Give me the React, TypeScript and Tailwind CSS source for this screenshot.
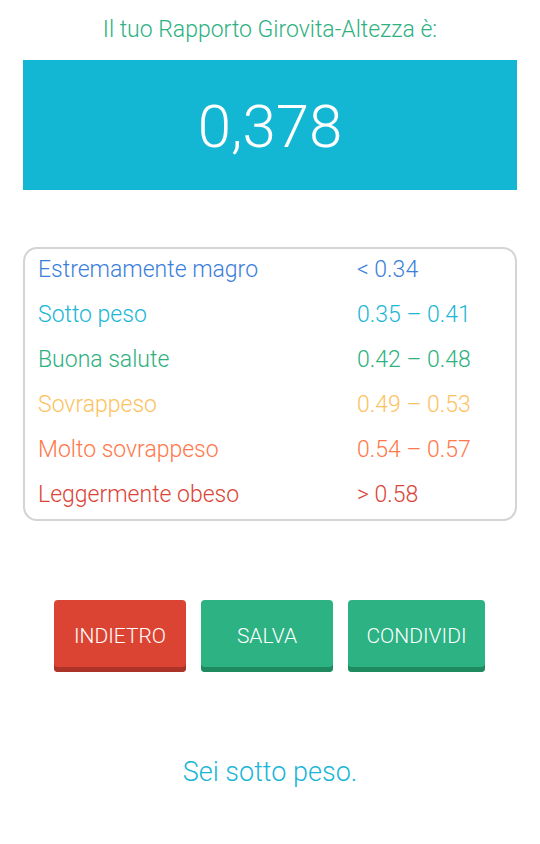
import React from "react";

const rows = [
  { label: "Estremamente magro", range: "< 0.34", color: "text-[#3b7edb]" },
  { label: "Sotto peso", range: "0.35 – 0.41", color: "text-[#1ab6d6]" },
  { label: "Buona salute", range: "0.42 – 0.48", color: "text-[#2db17f]" },
  { label: "Sovrappeso", range: "0.49 – 0.53", color: "text-[#fcc25e]" },
  { label: "Molto sovrappeso", range: "0.54 – 0.57", color: "text-[#ff774a]" },
  { label: "Leggermente obeso", range: "> 0.58", color: "text-[#db4437]" },
];

export default function App() {
  return (
    <div
      className="w-[540px] h-[844px] bg-white flex flex-col items-center"
      style={{ fontFamily: "Roboto, 'Noto Sans', sans-serif" }}
    >
      <div className="h-[60px] flex items-center justify-center text-[23px] font-light text-[#2db17f]">
        Il tuo Rapporto Girovita-Altezza è:
      </div>
      <div className="w-[494px] h-[130px] bg-[#14b7d3] flex items-center justify-center text-white text-[60px] font-light leading-none pt-[3px]">
        0,378
      </div>
      <div className="mt-[57px] w-[494px] border-2 border-[#d4d4d4] rounded-[14px] pl-[13px] pb-[1px]">
        <div className="-mt-[1px] flex flex-col">
          {rows.map((r) => (
            <div key={r.label} className={`h-[45px] grid grid-cols-[319px_1fr] items-center text-[23px] font-light ${r.color}`}>
              <span>{r.label}</span>
              <span>{r.range}</span>
            </div>
          ))}
        </div>
      </div>
      <div className="mt-[79px] -ml-[1px] flex gap-[15px]">
        <button className="w-[132px] h-[72px] rounded-[4px] bg-[#db4433] shadow-[inset_0_-5px_0_#ab3327] pt-[2px] text-white text-[21px] font-light">
          INDIETRO
        </button>
        <button className="w-[132px] h-[72px] rounded-[4px] bg-[#2cb283] shadow-[inset_0_-5px_0_#1f8a60] pt-[2px] text-white text-[21px] font-light">
          SALVA
        </button>
        <button className="w-[137px] h-[72px] rounded-[4px] bg-[#2cb283] shadow-[inset_0_-5px_0_#1f8a60] pt-[2px] text-white text-[21px] font-light">
          CONDIVIDI
        </button>
      </div>
      <div className="mt-[80px] text-[27px] font-light text-[#1ab6d6]">Sei sotto peso.</div>
    </div>
  );
}
